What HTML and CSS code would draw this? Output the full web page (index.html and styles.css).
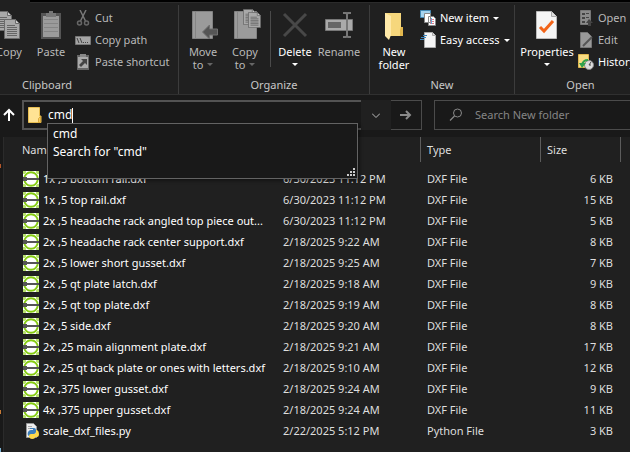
FILE: index.html
```html
<!DOCTYPE html>
<html lang="en">
<head>
<meta charset="utf-8">
<title>New folder</title>
<link rel="stylesheet" href="styles.css">
</head>
<body>
<svg class="defs" aria-hidden="true">
  <symbol id="dxf" viewBox="0 0 16 16">
    <path fill="#fff" d="M0 0h16v16H0z"/>
    <path fill="#8c1" d="M0 0h3v2H2v1H0zM16 0h-3v2h1v1h2zM0 16h3v-2H2v-1H0zM16 16h-3v-2h1v-1h2z" opacity=".6"/>
    <circle cx="8" cy="8" r="6.8" fill="#fff" stroke="#86cc12" stroke-width="1.9"/>
    <path fill="#555" d="M0 6h4v1h12v2H4v1H0z"/>
  </symbol>
  <symbol id="page" viewBox="0 0 16 20">
    <path fill="#a9a9a9" stroke="#6b6b6b" d="M.5.5h11l4 4v15H.5z"/>
    <path fill="#ccc" stroke="#6b6b6b" d="M11.500.5v4h4z"/>
    <path stroke="#666" d="M3 6.500h8M3 8.500h10M3 10.500h10M3 12.500h10M3 14.500h10M3 16.500h10"/>
  </symbol>
</svg>

<div class="tabs"><span class="tab-active"></span></div>
<div class="ribbon">
  <section class="group clipboard">
    <div class="tools">
      <button class="big off"><svg width="32" height="32" viewBox="0 0 32 32"><use href="#page" x="3" y="2" width="16" height="20"/><use href="#page" x="11" y="10" width="16" height="20"/></svg>Copy</button>
      <button class="big off"><svg width="32" height="32" viewBox="0 0 32 32"><path fill="#555" d="M6 4h20v26H6z"/><path fill="#9b9b9b" d="M8 7h16v21H8z"/><path fill="#777" d="M11 4h3V2h4v2h3v4H11z"/><path stroke="#858585" d="M9 10.500h14M9 14.500h14M9 18.500h14M9 22.500h14"/></svg>Paste</button>
      <div class="stack">
        <button class="small off"><svg width="16" height="16" viewBox="0 0 16 16"><path stroke="#777" stroke-width="1.500" fill="none" d="M5 0l5.500 11M11 0L5.500 11"/><circle cx="4.500" cy="13" r="2" fill="none" stroke="#666" stroke-width="1.500"/><circle cx="11.500" cy="13" r="2" fill="none" stroke="#666" stroke-width="1.500"/></svg>Cut</button>
        <button class="small off"><svg width="16" height="16" viewBox="0 0 16 16"><path fill="#a5a5a5" stroke="#777" d="M.5 4.500h15v8H.5z"/><path stroke="#444" fill="none" d="M2 6l2 5M5 6l2 5M8 10.500h1M10 10.500h1M12 10.500h1"/></svg>Copy path</button>
        <button class="small off"><svg width="16" height="16" viewBox="0 0 16 16"><path fill="#666" d="M2 1h12v15H2z"/><path fill="#aaa" d="M3 3h10v11H3z"/><path fill="#888" d="M5 0h6v3H5z"/><path fill="#444" d="M6 5h6v6l-2-2-4 4-2-2 4-4z"/></svg>Paste shortcut</button>
      </div>
    </div>
    <h2>Clipboard</h2>
  </section>
  <section class="group organize">
    <div class="tools">
      <button class="big off"><svg width="32" height="32" viewBox="0 0 32 32"><path fill="#9b9b9b" stroke="#828282" d="M5.500 2.500h20v27h-20z"/><path stroke="#858585" d="M8.500 3v26"/><path fill="#555" stroke="#707070" d="M15.500 23l7-7v4h8v6h-8v4z"/></svg>Move<span>to <i class="caret"></i></span></button>
      <button class="big off"><svg width="32" height="32" viewBox="0 0 32 32"><path fill="#9b9b9b" stroke="#828282" d="M5.500 2.500h22v27h-22z"/><path stroke="#858585" d="M8.500 3v26"/><use href="#page" x="14" y="0" width="13" height="16"/><use href="#page" x="19" y="3" width="13" height="16"/></svg>Copy<span>to <i class="caret"></i></span></button>
      <span class="rule"></span>
      <button class="big strong"><svg width="32" height="32" viewBox="0 0 32 32"><path stroke="#484848" stroke-width="3" d="M5 5l22 22M27 5L5 27"/></svg>Delete<span><i class="caret"></i></span></button>
      <button class="big off"><svg width="32" height="32" viewBox="0 0 32 32"><path fill="#aaa" stroke="#777" d="M2.500 10.500h27v11h-27z"/><path fill="#666" d="M5 13h13v6H5z"/><path fill="none" stroke="#777" stroke-width="2" d="M20 4h3l1 1 1-1h3M24 5v22M20 28h3l1-1 1 1h3"/></svg>Rename</button>
    </div>
    <h2>Organize</h2>
  </section>
  <section class="group new">
    <div class="tools">
      <button class="big strong"><svg width="32" height="32" viewBox="0 0 32 32"><path fill="#f6d77c" d="M7 4h16v14l2 1v8H7z"/><path fill="#e3b84e" d="M23 18h2v9h-3v-6z"/><path fill="#ffe9a8" d="M7 4l6 3v19l-2 5-4-4z"/></svg>New<span>folder</span></button>
      <div class="stack">
        <button class="small"><svg width="16" height="16" viewBox="0 0 16 16"><path fill="#a5d4ef" stroke="#4389b5" d="M.5.5h10v7H.5z"/><path fill="#fff" stroke="#888" d="M4.500 3.500h6v9h-6zM8.500 6.500h5l2 2v7h-7z"/><path stroke="#db7b88" d="M10 9.500h4M10 11.500h4M10 13.500h4"/><path stroke="#68a6d8" d="M11.500 8v6"/></svg>New item<i class="caret"></i></button>
        <button class="small"><svg width="16" height="16" viewBox="0 0 16 16"><path fill="#f4f4f4" stroke="#aaa" d="M4.500.5h8l3 3v12h-11z"/><path fill="#ddd" stroke="#aaa" d="M12.500.5v3h3"/><path stroke="#3b86bf" d="M3 3.500h4M1 5.500h5M0 7.500h4"/></svg>Easy access<i class="caret"></i></button>
      </div>
    </div>
    <h2>New</h2>
  </section>
  <section class="group open">
    <div class="tools">
      <button class="big strong"><svg width="32" height="32" viewBox="0 0 32 32"><path fill="#f5f5f5" stroke="#bbb" d="M5.500 2.500h15l5 5v22h-20z"/><path fill="#ddd" stroke="#aaa" d="M20.500 2.500v5h5"/><path fill="none" stroke="#f26419" stroke-width="3" d="M9 18l4 4 9-10"/></svg>Properties<span><i class="caret"></i></span></button>
      <div class="stack">
        <button class="small off"><svg width="16" height="16" viewBox="0 0 16 16"><path fill="#8b8b8b" stroke="#777" d="M2.500.5h10v14h-10z"/><path fill="#444" d="M4 3h3v2H4zM4 7h3v2H4zM4 11h3v2H4zM8 3h3v1H8zM8 7h3v1H8zM11 9l4 4h-2v3h-3v-3H8z"/></svg>Open</button>
        <button class="small off"><svg width="16" height="16" viewBox="0 0 16 16"><path fill="#999" stroke="#777" d="M2.500.5h7l4 4v11h-11z"/><path stroke="#555" stroke-width="2" d="M14 5l-9 9"/></svg>Edit</button>
        <button class="small"><svg width="16" height="16" viewBox="0 0 16 16"><path fill="#f8dc82" stroke="#dfb750" d="M.5.5h10v13H.5z"/><circle cx="11" cy="11" r="4.500" fill="#ddd" stroke="#888"/><path stroke="#444" fill="none" d="M13 8l-2 3h2"/><path fill="none" stroke="#31a24c" stroke-width="2" d="M4 11q1-5 6-5"/><path fill="#31a24c" d="M1 9h7l-4 5z"/></svg>History</button>
      </div>
    </div>
    <h2>Open</h2>
  </section>
</div>

<div class="nav">
  <button class="up" aria-label="Up"><svg width="12" height="14" viewBox="0 0 12 14"><path fill="none" stroke="#fff" stroke-width="2" d="M6 13V2M1 7l5-5 5 5"/></svg></button>
  <form class="address">
    <label class="field">
      <svg width="14" height="16" viewBox="0 0 14 16"><path fill="#ffe394" stroke="#e9bf52" d="M.5.5h11v8.500h1.500v6.500H.5z"/><path fill="#f5cd62" stroke="#dba93b" d="M10.500 11.500l2-2v6h-2z"/></svg>
      <input type="text" value="cmd" aria-label="Address"><span class="cursor"></span>
    </label>
    <div class="suggest">
      <a href="#">cmd</a>
      <a href="#">Search for "cmd"</a>
      <svg width="8" height="8" viewBox="0 0 8 8"><path fill="#ccc" d="M6 0h2v2H6zM3 3h2v2H3zM6 3h2v2H6zM0 6h2v2H0zM3 6h2v2H3zM6 6h2v2H6z"/></svg>
    </div>
    <button type="button" class="drop" aria-label="Previous locations"><svg width="8" height="5" viewBox="0 0 8 5"><path fill="none" stroke="#bbb" d="M0 .5l4 4 4-4"/></svg></button>
    <button type="button" class="go" aria-label="Go"><svg width="12" height="10" viewBox="0 0 12 10"><path fill="none" stroke="#8a8a8a" stroke-width="2" d="M0 5h10M6 1l4 4-4 4"/></svg></button>
  </form>
  <label class="search">
    <svg width="14" height="14" viewBox="0 0 14 14"><circle cx="8.500" cy="5" r="4" fill="none" stroke="#888"/><path stroke="#888" stroke-width="1.300" d="M5.500 8L1 12.500"/></svg>
    <input type="text" placeholder="Search New folder" aria-label="Search New folder">
  </label>
</div>

<div class="main">
  <div class="pane"><i class="orange"></i><i class="blue"></i><i class="white"></i></div>
  <table>
    <colgroup><col class="c-name"><col class="c-date"><col class="c-type"><col class="c-size"><col></colgroup>
    <thead><tr><th>Name</th><th></th><th>Type</th><th>Size</th><td></td></tr></thead>
    <tbody>
      <tr><td><svg><use href="#dxf"/></svg>1x ,5 bottom rail.dxf</td><td>6/30/2023 11:12 PM</td><td>DXF File</td><td>6 KB</td></tr>
      <tr><td><svg><use href="#dxf"/></svg>1x ,5 top rail.dxf</td><td>6/30/2023 11:12 PM</td><td>DXF File</td><td>15 KB</td></tr>
      <tr><td><svg><use href="#dxf"/></svg>2x ,5 headache rack angled top piece out...</td><td>6/30/2023 11:12 PM</td><td>DXF File</td><td>5 KB</td></tr>
      <tr><td><svg><use href="#dxf"/></svg>2x ,5 headache rack center support.dxf</td><td>2/18/2025 9:22 AM</td><td>DXF File</td><td>8 KB</td></tr>
      <tr><td><svg><use href="#dxf"/></svg>2x ,5 lower short gusset.dxf</td><td>2/18/2025 9:25 AM</td><td>DXF File</td><td>7 KB</td></tr>
      <tr><td><svg><use href="#dxf"/></svg>2x ,5 qt plate latch.dxf</td><td>2/18/2025 9:18 AM</td><td>DXF File</td><td>9 KB</td></tr>
      <tr><td><svg><use href="#dxf"/></svg>2x ,5 qt top plate.dxf</td><td>2/18/2025 9:19 AM</td><td>DXF File</td><td>8 KB</td></tr>
      <tr><td><svg><use href="#dxf"/></svg>2x ,5 side.dxf</td><td>2/18/2025 9:20 AM</td><td>DXF File</td><td>8 KB</td></tr>
      <tr><td><svg><use href="#dxf"/></svg>2x ,25 main alignment plate.dxf</td><td>2/18/2025 9:21 AM</td><td>DXF File</td><td>17 KB</td></tr>
      <tr><td><svg><use href="#dxf"/></svg>2x ,25 qt back plate or ones with letters.dxf</td><td>2/18/2025 9:10 AM</td><td>DXF File</td><td>12 KB</td></tr>
      <tr><td><svg><use href="#dxf"/></svg>2x ,375 lower gusset.dxf</td><td>2/18/2025 9:24 AM</td><td>DXF File</td><td>9 KB</td></tr>
      <tr><td><svg><use href="#dxf"/></svg>4x ,375 upper gusset.dxf</td><td>2/18/2025 9:24 AM</td><td>DXF File</td><td>11 KB</td></tr>
      <tr><td><svg viewBox="0 0 16 16"><path fill="#eee" stroke="#999" d="M3.500.5h7l3 3v11h-10z"/><path stroke="#aaa" d="M5 3.500h4M5 5.500h3"/><path fill="#3d7ebb" d="M7 5h4q2 0 2 2v2q0 2-2 2H8v2H6q-2-1-1-4 1-2 3-2h2V6H7z"/><path fill="#ffd94a" d="M13 7h1q2 1 2 4t-2 3h-2v1q-1 1-3 1t-3-2v-1q0-2 2-2h3q2 0 2-2z"/></svg>scale_dxf_files.py</td><td>2/22/2025 5:12 PM</td><td>Python File</td><td>3 KB</td></tr>
    </tbody>
  </table>
</div>
</body>
</html>
```
FILE: styles.css
```css
* { box-sizing: border-box; }
html, body { height: 100%; }
body {
  margin: 0;
  display: flex;
  flex-direction: column;
  overflow: hidden;
  background: #191919;
  color: #fff;
  font: 11px/16px "Noto Sans", "Open Sans", sans-serif;
}
button, input { font: inherit; color: inherit; background: none; border: 0; padding: 0; margin: 0; }
svg { flex: none; }
a { color: inherit; text-decoration: none; }
.defs { position: absolute; width: 0; height: 0; }

.tabs { height: 3px; background: #000; border-bottom: 1px solid #2b2b2b; flex: none; }
.tab-active { display: block; width: 30px; height: 3px; background: #202020; }

.ribbon {
  display: flex;
  flex: none;
  height: 92px;
  padding-top: 2px;
  margin-left: -84px;
  background: #202020;
  border-bottom: 1px solid #303030;
}
.group { flex: none; display: flex; flex-direction: column; border-right: 1px solid #3c3c3c; }
.clipboard { width: 263px; }
.organize { width: 191px; }
.new { width: 145px; }
.open { width: 132px; }
.group h2 { margin: 0; font: inherit; text-align: center; color: #c8c8c8; }
.tools { display: flex; height: 72px; padding-top: 2px; white-space: nowrap; }
.clipboard .tools { padding-left: 72px; }
.organize .tools { padding-left: 3px; }
.new .tools { padding-left: 1px; }
.open .tools { padding-left: 4px; }
.big { display: flex; flex-direction: column; align-items: center; width: 42px; line-height: 13px; padding-top: 2px; }
.big svg { margin-bottom: 4px; }
.big span { display: flex; align-items: center; gap: 4px; height: 13px; }
.organize .rule ~ .big { width: 44px; }
.new .big { width: 46px; }
.open .big { width: 56px; }
.off { color: #b9b9b9; }
.stack { display: flex; flex-direction: column; padding-left: 3px; }
.small { display: flex; align-items: center; gap: 4px; height: 22px; }
.caret { border: 3px solid transparent; border-top-color: currentColor; border-bottom: 0; }
.off .caret { border-top-color: #666; }
.rule { width: 1px; height: 56px; margin: 4px 2px 0 4px; background: #4a4a4a; }

.nav { display: flex; flex: none; height: 42px; padding: 5px 0 7px; font-size: 12px; }
.up { flex: none; width: 22px; padding-right: 4px; display: flex; align-items: center; justify-content: center; }
.address { position: relative; display: flex; flex: 0 0 400px; }
.field { flex: 1; display: flex; align-items: center; border: solid #535353; border-width: 2px 0 2px 2px; padding-left: 4px; }
.field input { width: 24px; margin-left: 6px; outline: 0; }
.cursor { width: 1px; height: 15px; background: #fff; }
.drop { width: 30px; background: #202020; display: flex; align-items: center; justify-content: center; }
.go { width: 31px; border: 1px solid #4b4b4b; border-left: 0; display: flex; align-items: center; justify-content: center; }
.suggest {
  position: absolute;
  z-index: 1;
  left: 25px;
  top: 23px;
  width: 311px;
  height: 56px;
  padding: 1px 5px;
  background: #191919;
  border: 1px solid #636363;
  box-shadow: 2px 2px 3px #0006;
  line-height: 18px;
}
.suggest a { display: block; }
.suggest svg { position: absolute; right: 2px; bottom: 2px; }
.search { flex: 1; min-width: 0; display: flex; align-items: center; gap: 12px; margin-left: 12px; padding-left: 14px; border: 1px solid #4b4b4b; border-right: 0; }
.search input { flex: 1; min-width: 0; width: 0; font-size: 11px; }
.search input::placeholder { color: #858585; opacity: 1; }

.main { flex: 1; display: flex; background: #202020; min-height: 0; }
.pane { width: 4px; background: #191919; border-right: 1px solid #2b2b2b; flex: none; }
.pane i { display: block; width: 1px; height: 4px; }
.orange { margin-top: 27px; background: #b4562a; }
.blue { margin-top: 242px; background: #c87a35; }
.white { margin-top: 34px; background: #7fb6d8; }
table { flex: 1; width: 100%; table-layout: fixed; border-collapse: separate; border-spacing: 0; align-self: flex-start; white-space: nowrap; }
.c-name { width: 273px; }
.c-date { width: 144px; }
.c-type { width: 120px; }
.c-size { width: 80px; }
th { height: 25px; padding: 0 0 0 6px; font-weight: 400; text-align: left; color: #dedede; border-right: 1px solid #5c5c5c; }
th:first-child { padding-left: 18px; }
tbody::before { content: ""; display: block; height: 6px; }
tbody td { height: 21px; padding: 0 0 0 6px; color: #dedede; }
tbody td:first-child { padding-left: 19px; color: #fff; }
tbody td:last-child { text-align: right; padding-right: 8px; }
td svg { width: 16px; height: 16px; margin-right: 4px; vertical-align: -4px; }
```
